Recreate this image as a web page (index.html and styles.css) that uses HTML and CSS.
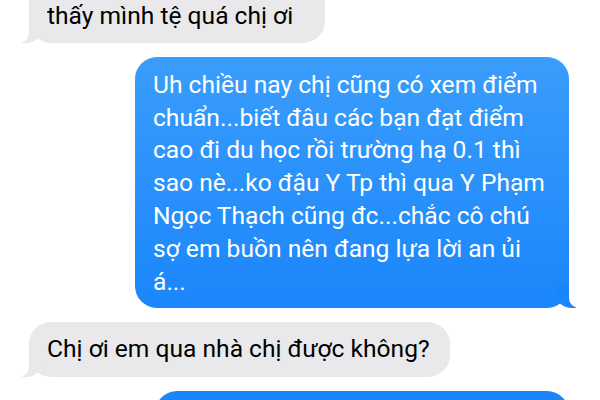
FILE: index.html
```html
<!DOCTYPE html>
<html lang="vi">
<head>
  <meta charset="UTF-8" />
  <meta name="viewport" content="width=device-width, initial-scale=1.0"/>
  <title>Tin nhắn</title>
  <link rel="stylesheet" href="styles.css">
</head>
<body>
  <div class="thread">
    <!-- tin trước, bị cắt ở mép trên -->
    <div class="msg them cut">thấy mình tệ quá chị ơi</div>

    <div class="msg me">Uh chiều nay chị cũng có xem điểm<br>
      chuẩn...biết đâu các bạn đạt điểm<br>
      cao đi du học rồi trường hạ 0.1 thì<br>
      sao nè...ko đậu Y Tp thì qua Y Phạm<br>
      Ngọc Thạch cũng đc...chắc cô chú<br>
      sợ em buồn nên đang lựa lời an ủi<br>
      á...</div>

    <div class="msg them">Chị ơi em qua nhà chị được không?</div>

    <div class="msg me next"></div>
  </div>
</body>
</html>
```

FILE: styles.css
```css
:root {
  --bg: #ffffff;
  --gray: #e9e9eb;
  --blue-top: #3a9dfb;
  --blue-bottom: #1b86fb;
}

* {
  margin: 0;
  padding: 0;
  box-sizing: border-box;
}

body {
  background-color: var(--bg);
  font-family: Roboto, "Noto Sans", sans-serif;
  width: 600px;
  height: 400px;
  overflow: hidden;
}

.thread {
  display: flex;
  flex-direction: column;
  gap: 14px;
  padding: 0 31px 0 29px;
}

.msg {
  position: relative;
  font-size: 24.6px;
  line-height: 32.8px;
  white-space: nowrap;
  padding: 12px 10px 10px 18px;
  border-radius: 22px;
}

/* đuôi bong bóng */
.msg::before,
.msg::after {
  content: "";
  position: absolute;
  bottom: 0;
  height: 22px;
}

.them {
  align-self: flex-start;
  background-color: var(--gray);
  color: #000;
}

.them::before {
  left: -7px;
  width: 20px;
  background-color: var(--gray);
  border-bottom-right-radius: 16px 14px;
}

.them::after {
  left: -26px;
  width: 26px;
  background-color: var(--bg);
  border-bottom-right-radius: 10px;
}

.me {
  align-self: flex-end;
  background: linear-gradient(to bottom, var(--blue-top), var(--blue-bottom));
  color: #fff;
  width: 434px;
}

.me::before {
  right: -7px;
  width: 20px;
  background-color: var(--blue-bottom);
  border-bottom-left-radius: 16px 14px;
}

.me::after {
  right: -26px;
  width: 26px;
  background-color: var(--bg);
  border-bottom-left-radius: 10px;
}

.cut {
  width: 296px;
  margin-top: -40px;
  padding-top: 40px;
  border-top-left-radius: 0;
  border-top-right-radius: 0;
}

.them:not(.cut) {
  width: 421px;
  padding-top: 11px;
  padding-bottom: 11px;
}

.next {
  width: 414px;
  min-height: 80px;
  background: var(--blue-bottom);
}
```
